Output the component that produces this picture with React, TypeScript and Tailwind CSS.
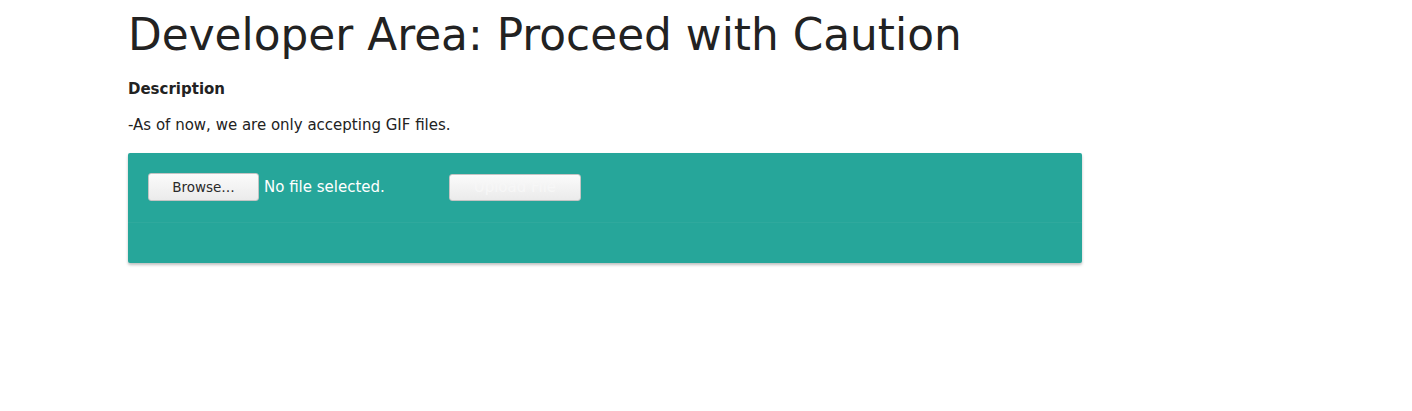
export default function App() {
  return (
    <div className="min-h-[411px] bg-white text-[#222] pl-[128px]" style={{ fontFamily: '"DejaVu Sans", sans-serif' }}>
      <div className="w-[954px]">
        <h1 className="text-[43.8px] leading-[48px] pt-[11px] m-0">Developer Area: Proceed with Caution</h1>
        <h4 className="text-[15px] font-bold mt-[20px] leading-[20px]">Description</h4>
        <p className="text-[15px] mt-[16px] leading-[20px]">-As of now, we are only accepting GIF files.</p>
        <div className="mt-[18px] bg-[#26a69a] rounded-[2px] shadow-[0_2px_3px_rgba(0,0,0,0.25)]">
          <div className="flex items-start h-[70px] pt-[20px] px-[20px] border-b border-[#2fa99d]">
            <button className="h-[28px] w-[111px] rounded-[3px] border border-[#c4c4c4] bg-gradient-to-b from-[#fbfbfb] to-[#ebebeb] text-[13.5px] text-[#2a2a2a]">Browse…</button>
            <span className="ml-[5px] text-[15px] leading-[28px] text-white">No file selected.</span>
            <button className="ml-[64px] mt-[1px] h-[27px] w-[132px] rounded-[3px] border border-[#c4c4c4] bg-gradient-to-b from-[#fbfbfb] to-[#ebebeb] text-[15px] text-[#f7f7f7]">Upload File</button>
          </div>
          <div className="h-[40px]" />
        </div>
      </div>
    </div>
  );
}
